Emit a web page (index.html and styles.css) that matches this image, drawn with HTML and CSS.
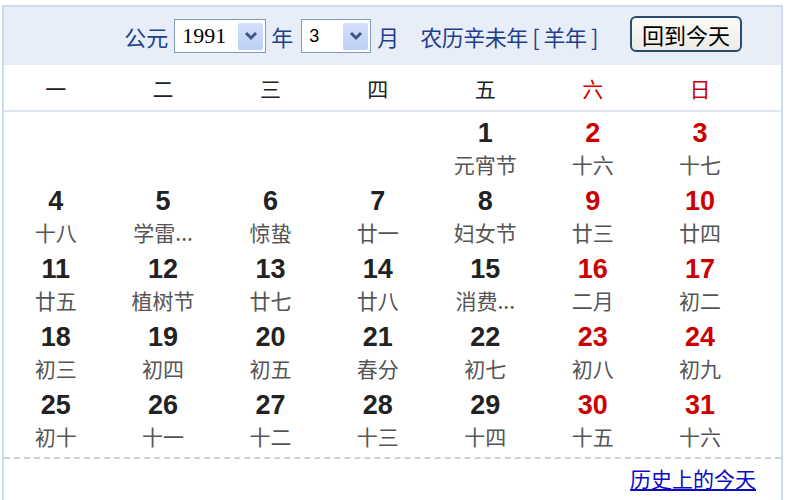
FILE: index.html
```html
<!DOCTYPE html>
<html lang="zh-CN">
<head>
<meta charset="utf-8">
<title>万年历</title>
<link rel="stylesheet" href="styles.css">
</head>
<body>
<div class="cal">
  <div class="head">
    <span class="lbl">公元</span>
    <span class="sel sel-year"><span class="val">1991</span><span class="arr"><svg width="14" height="10" viewBox="0 0 14 10"><path d="M2 2 L7 7 L12 2" fill="none" stroke="#3f5683" stroke-width="3"/></svg></span></span>
    <span class="lbl lbl-y">年</span>
    <span class="sel sel-month"><span class="val val-m">3</span><span class="arr"><svg width="14" height="10" viewBox="0 0 14 10"><path d="M2 2 L7 7 L12 2" fill="none" stroke="#3f5683" stroke-width="3"/></svg></span></span>
    <span class="lbl lbl-m">月</span>
    <span class="lbl lunar">农历辛未年 [ 羊年 ]</span>
    <button class="today">回到今天</button>
  </div>
  <div class="week">
    <div class="wd">一</div><div class="wd">二</div><div class="wd">三</div><div class="wd">四</div><div class="wd">五</div><div class="wd we">六</div><div class="wd we">日</div>
  </div>
  <div class="days">
    <div class="d"></div><div class="d"></div><div class="d"></div><div class="d"></div>
    <div class="d"><b>1</b><i>元宵节</i></div><div class="d we"><b>2</b><i>十六</i></div><div class="d we"><b>3</b><i>十七</i></div>
    <div class="d"><b>4</b><i>十八</i></div><div class="d"><b>5</b><i>学雷...</i></div><div class="d"><b>6</b><i>惊蛰</i></div><div class="d"><b>7</b><i>廿一</i></div><div class="d"><b>8</b><i>妇女节</i></div><div class="d we"><b>9</b><i>廿三</i></div><div class="d we"><b>10</b><i>廿四</i></div>
    <div class="d"><b>11</b><i>廿五</i></div><div class="d"><b>12</b><i>植树节</i></div><div class="d"><b>13</b><i>廿七</i></div><div class="d"><b>14</b><i>廿八</i></div><div class="d"><b>15</b><i>消费...</i></div><div class="d we"><b>16</b><i>二月</i></div><div class="d we"><b>17</b><i>初二</i></div>
    <div class="d"><b>18</b><i>初三</i></div><div class="d"><b>19</b><i>初四</i></div><div class="d"><b>20</b><i>初五</i></div><div class="d"><b>21</b><i>春分</i></div><div class="d"><b>22</b><i>初七</i></div><div class="d we"><b>23</b><i>初八</i></div><div class="d we"><b>24</b><i>初九</i></div>
    <div class="d"><b>25</b><i>初十</i></div><div class="d"><b>26</b><i>十一</i></div><div class="d"><b>27</b><i>十二</i></div><div class="d"><b>28</b><i>十三</i></div><div class="d"><b>29</b><i>十四</i></div><div class="d we"><b>30</b><i>十五</i></div><div class="d we"><b>31</b><i>十六</i></div>
  </div>
  <div class="foot"><a href="#" class="hist">历史上的今天</a></div>
</div>
</body>
</html>
```
FILE: styles.css
```css
html, body {
  margin: 0;
  padding: 0;
  background: #fff;
  font-family: "Noto Sans CJK SC", "Noto Sans", sans-serif;
}
body {
  height: 500px;
  overflow: hidden;
}
.cal {
  margin: 5px 0 0 2px;
  width: 777px;
  height: 520px;
  border: 2px solid #cddbf1;
  background: #fff;
}
.head {
  height: 58px;
  background: #e7eef8;
  display: flex;
  align-items: center;
  justify-content: flex-end;
  padding-right: 39px;
}
.lbl {
  color: #1f3f8c;
  font-size: 22px;
  line-height: 24px;
}
.sel {
  display: flex;
  align-items: center;
  justify-content: space-between;
  height: 34px;
  box-sizing: border-box;
  border: 1px solid #7f9db9;
  background: #fff;
  padding: 2px;
  margin-left: 6px;
}
.sel-year { width: 92px; }
.sel-month { width: 70px; margin-left: 8px; }
.val {
  font-family: "Liberation Serif", serif;
  font-size: 22px;
  color: #000;
  padding-left: 5px;
}
.val-m {
  font-family: "Liberation Sans", sans-serif;
  font-size: 18px;
}
.arr {
  width: 25px;
  height: 27px;
  background: linear-gradient(#d3e0fc, #bccff8);
  border-radius: 2px;
  display: flex;
  align-items: center;
  justify-content: center;
}
.lbl-y { margin-left: 5px; }
.lbl-m { margin-left: 6px; }
.lunar { margin-left: 21px; letter-spacing: -0.5px; }
.today {
  margin-left: 32px;
  width: 112px;
  height: 36px;
  border: 2px solid #2b4a72;
  border-radius: 6px;
  background: linear-gradient(#fbfbf8, #ecebe4);
  font-family: "Noto Sans CJK SC", sans-serif;
  font-size: 22px;
  line-height: 28px;
  color: #000;
  padding: 0;
  margin-top: -5px;
}
.week {
  display: grid;
  grid-template-columns: repeat(7, 107.4px);
  height: 45px;
  border-bottom: 2px solid #dfe6f0;
  align-items: center;
}
.wd {
  text-align: center;
  padding-right: 4px;
  font-size: 21px;
  color: #222;
  line-height: 24px;
}
.we { color: #cc0000; }
.days {
  display: grid;
  grid-template-columns: repeat(7, 107.4px);
  grid-auto-rows: 68px;
  padding-bottom: 5px;
  border-bottom: 2px dashed #d2d2d2;
}
.d {
  text-align: center;
  padding-right: 4px;
  padding-top: 6px;
}
.d b {
  display: block;
  font-family: "Liberation Sans", Arial, sans-serif;
  font-weight: bold;
  font-size: 27px;
  line-height: 30px;
  color: #222;
}
.d.we b { color: #cc0000; }
.d i {
  display: block;
  font-style: normal;
  font-size: 21px;
  line-height: 24px;
  margin-top: 4px;
  color: #555;
}
.foot {
  display: flex;
  justify-content: flex-end;
  padding: 6px 25px 0 0;
}
.hist {
  font-size: 21px;
  line-height: 26px;
  color: #0b0bc2;
  text-decoration: underline;
}
```
